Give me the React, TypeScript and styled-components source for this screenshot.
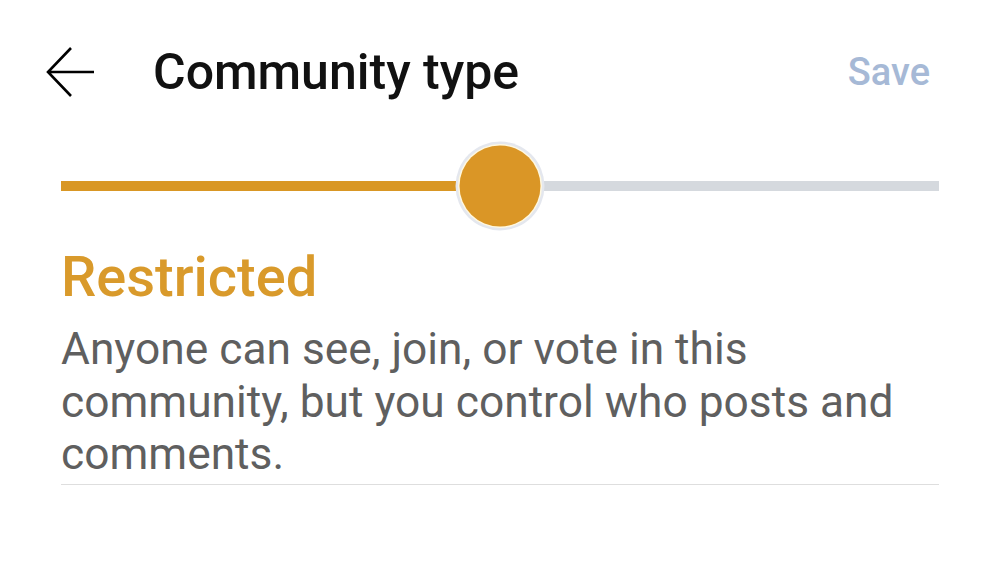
import React from "react";
import styled, { createGlobalStyle } from "styled-components";

const Global = createGlobalStyle`
  html, body { margin: 0; padding: 0; background: #ffffff; }
  body { font-family: Roboto, "Noto Sans", Arial, sans-serif; }
`;

const Page = styled.div`
  width: 1000px;
  height: 561px;
  background: #ffffff;
  display: flex;
  flex-direction: column;
  overflow: hidden;
`;

const Header = styled.header`
  height: 143px;
  display: flex;
  align-items: center;
  padding: 0 70px 0 44px;
  box-sizing: border-box;
`;

const BackButton = styled.button`
  width: 56px;
  height: 56px;
  padding: 0;
  border: none;
  background: none;
  display: flex;
  align-items: center;
  justify-content: center;
  margin-right: 53px;
`;

const Title = styled.h1`
  margin: 0;
  flex: 1;
  font-size: 50px;
  font-weight: 500;
  color: #111111;
  letter-spacing: 0;
`;

const SaveButton = styled.button`
  border: none;
  background: none;
  padding: 0;
  font-family: Roboto, Arial, sans-serif;
  font-size: 38px;
  font-weight: 500;
  color: #a6b9d6;
`;

const Body = styled.main`
  padding: 0 61px;
  display: flex;
  flex-direction: column;
`;

const SliderRow = styled.div`
  position: relative;
  height: 86px;
  display: flex;
  align-items: center;
`;

const Track = styled.div`
  flex: 1;
  height: 10px;
  background: #d5d9de;
  position: relative;
`;

const Fill = styled.div`
  position: absolute;
  left: 0;
  top: 0;
  bottom: 0;
  background: #d99724;
`;

const Thumb = styled.div`
  position: absolute;
  top: 50%;
  width: 81px;
  height: 81px;
  border-radius: 50%;
  background: #da9626;
  transform: translate(-50%, -50%);
  box-shadow: 0 0 0 1.5px #fff8e0, 0 0 0 4px #e4e7ee;
`;

const TypeName = styled.h2`
  margin: 18px 0 0;
  font-size: 56px;
  line-height: 60px;
  font-weight: 500;
  color: #d99a2b;
`;

const Description = styled.p`
  margin: 16px 0 0;
  font-size: 44.3px;
  line-height: 52.5px;
  font-weight: 400;
  color: #5f5f5f;
`;

const Divider = styled.hr`
  margin: 3px 0 0;
  border: none;
  height: 1px;
  background: #dedede;
`;

const BackArrow = () => (
  <svg width="56" height="56" viewBox="0 0 56 56" fill="none">
    <path
      d="M50 28 H4 M27 4 L4 28 L27 52"
      stroke="#000"
      strokeWidth="2.6"
      strokeLinecap="butt"
      strokeLinejoin="miter"
    />
  </svg>
);

export default function App() {
  const value = 50;
  return (
    <>
      <Global />
      <Page>
        <Header>
          <BackButton aria-label="Back">
            <BackArrow />
          </BackButton>
          <Title>Community type</Title>
          <SaveButton>Save</SaveButton>
        </Header>
        <Body>
          <SliderRow>
            <Track>
              <Fill style={{ width: `${value}%` }} />
              <Thumb style={{ left: `${value}%` }} />
            </Track>
          </SliderRow>
          <TypeName>Restricted</TypeName>
          <Description>
            Anyone can see, join, or vote in this community, but you control who posts and comments.
          </Description>
          <Divider />
        </Body>
      </Page>
    </>
  );
}
